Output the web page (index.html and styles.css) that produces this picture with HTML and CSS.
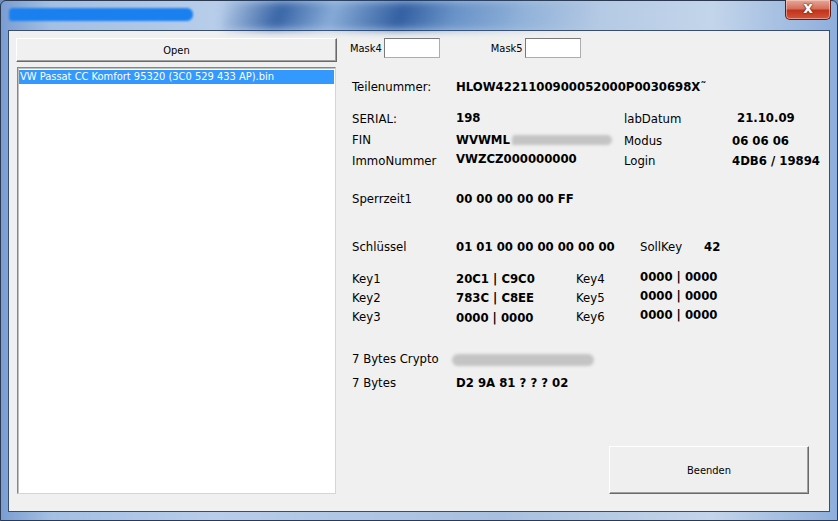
FILE: index.html
```html
<!DOCTYPE html>
<html>
<head>
<meta charset="utf-8">
<link rel="stylesheet" href="styles.css">
</head>
<body>
<div class="window">
  <div class="titlebar">
    <div class="title-blur"></div>
    <div class="streaks"></div>
    <div class="close-btn"><span>x</span></div>
  </div>
  <div class="client">
    <div class="left">
      <button class="btn open-btn">Open</button>
      <div class="listbox">
        <div class="list-item selected">VW Passat CC Komfort 95320 (3C0 529 433 AP).bin</div>
      </div>
    </div>
    <div class="right">
      <div class="mask-row">
        <span class="small-label">Mask4</span><span class="textbox"></span>
        <span class="small-label mask5">Mask5</span><span class="textbox"></span>
      </div>
      <div class="row teil">
        <span class="lbl">Teilenummer:</span><span class="val">HLOW4221100900052000P0030698X˜</span>
      </div>
      <div class="grid info">
        <span class="lbl">SERIAL:</span><span class="val">198</span><span class="lbl">labDatum</span><span class="val shift">21.10.09</span>
        <span class="lbl">FIN</span><span class="val fin">WVWML<span class="smudge fin-smudge"></span></span><span class="lbl mod">Modus</span><span class="val mod">06 06 06</span>
        <span class="lbl">ImmoNummer</span><span class="val up">VWZCZ000000000</span><span class="lbl">Login</span><span class="val">4DB6 / 19894</span>
      </div>
      <div class="row sperr">
        <span class="lbl">Sperrzeit1</span><span class="val">00 00 00 00 00 FF</span>
      </div>
      <div class="grid schl">
        <span class="lbl">Schlüssel</span><span class="val">01 01 00 00 00 00 00 00</span><span class="lbl">SollKey</span><span class="val">42</span>
      </div>
      <div class="grid keys">
        <span class="lbl">Key1</span><span class="val">20C1 | C9C0</span><span class="lbl">Key4</span><span class="val up">0000 | 0000</span>
        <span class="lbl">Key2</span><span class="val">783C | C8EE</span><span class="lbl">Key5</span><span class="val up">0000 | 0000</span>
        <span class="lbl">Key3</span><span class="val down">0000 | 0000</span><span class="lbl">Key6</span><span class="val up">0000 | 0000</span>
      </div>
      <div class="grid bytes">
        <span class="lbl">7 Bytes Crypto</span><span class="val"><span class="smudge crypto-smudge"></span></span>
        <span class="lbl">7 Bytes</span><span class="val">D2 9A 81 ? ? ? 02</span>
      </div>
      <div class="bottom">
        <button class="btn end-btn">Beenden</button>
      </div>
    </div>
  </div>
  <div class="bottom-frame"></div>
</div>
</body>
</html>
```
FILE: styles.css
```css
* { box-sizing: border-box; }
html, body { margin: 0; padding: 0; }
body {
  width: 838px; height: 521px; overflow: hidden;
  background: #6f8fbf;
  font-family: "DejaVu Sans Condensed", "DejaVu Sans", sans-serif;
}
.window {
  width: 838px; height: 521px;
  display: flex; flex-direction: column;
  background: linear-gradient(90deg, #7a9dd2 0%, #a3bfe3 6%, #b7cdea 25%, #a8c0df 60%, #c3d5ea 85%, #8eaedc 100%);
  border: 1px solid #2b3a52;
  border-radius: 6px 6px 0 0;
  padding: 0 7px 0 7px;
}
.titlebar {
  height: 29px; flex: none;
  position: relative;
}
.streaks {
  position: absolute; left: 215px; top: 0; width: 370px; height: 29px;
  background: linear-gradient(110deg, rgba(40,90,160,0) 0%, rgba(25,75,150,0.8) 16%, rgba(60,120,190,0.35) 30%, rgba(20,70,145,0.8) 48%, rgba(40,100,175,0.5) 62%, rgba(70,130,195,0.25) 80%, rgba(60,120,190,0) 100%);
  filter: blur(4px);
}
.title-blur {
  position: absolute; left: 1px; top: 7px; width: 184px; height: 13px;
  background: #1b80ef;
  border-radius: 4px 6px 6px 3px;
  filter: blur(0.8px);
  z-index: 1;
}
.close-btn {
  position: absolute; right: -1px; top: -1px; width: 46px; height: 20px;
  background: linear-gradient(180deg, #e7a89a 0%, #d5705c 45%, #c2331c 55%, #d2553c 100%);
  border: 1px solid #5a1f1a;
  border-top: none;
  border-radius: 0 0 5px 5px;
  box-shadow: inset 0 0 0 1px rgba(255,220,210,0.5);
  display: flex; align-items: center; justify-content: center;
  z-index: 2;
}
.close-btn span {
  color: #fff; font: bold 15px/1 "DejaVu Sans", sans-serif;
  text-shadow: 0 0 2px #5a1010, 0 0 1px #5a1010;
  margin-top: -3px;
}
.client {
  flex: 1;
  background: #f0f0f0;
  border: 1px solid #3a4e6c;
  display: flex;
  padding: 7px 20px 17px 7px;
}
.bottom-frame { height: 8px; flex: none; }
.left {
  width: 321px; flex: none;
  display: flex; flex-direction: column;
}
.btn {
  font: 11px "DejaVu Sans Condensed", "DejaVu Sans", sans-serif;
  color: #000;
  padding: 0;
}
.open-btn { height: 24px; width: 321px; background: #f0f0f0; border: 1px solid #fff; border-right-color: #696969; border-bottom-color: #696969; box-shadow: inset -1px -1px 0 #a0a0a0; }
.listbox {
  margin: 5px 1px 0 1px;
  flex: 1;
  background: #fff;
  border: 1px solid #d5d5d5;
  border-top-color: #828790; border-left-color: #828790;
  box-shadow: inset 1px 1px 0 #c0c0c0;
  padding: 2px 1px;
}
.list-item {
  font: 11px/14px "DejaVu Sans Condensed", "DejaVu Sans", sans-serif;
  padding-left: 1px;
  white-space: nowrap;
}
.selected { background: #3399ff; color: #fff; }
.right {
  flex: 1;
  min-width: 0;
  margin-left: 13px;
  display: flex; flex-direction: column;
  font-size: 13px;
  color: #000;
}
.mask-row { display: flex; align-items: center; height: 20px; }
.small-label { font-size: 11px; margin-right: 2px; }
.mask5 { margin-left: 51px; }
.textbox {
  width: 56px; height: 20px; background: #fff;
  border: 1px solid #abadb3; border-top-color: #7a7a7a; border-left-color: #7a7a7a;
}
.lbl, .val { white-space: nowrap; }
.val { font-weight: bold; }
.row { display: flex; line-height: 20px; padding-left: 2px; }
.row .lbl { width: 104px; flex: none; }
.teil { margin-top: 19px; }
.grid { display: grid; padding-left: 2px; }
.info { grid-template-columns: 104px 168px 108px auto; line-height: 21px; margin-top: 11px; }
.shift { padding-left: 5px; }
.info .val:nth-child(2), .info .val:nth-child(4) { position: relative; top: -1px; }
.mod { position: relative; top: 1px; }
.up { position: relative; top: -2px; }
.down { position: relative; top: 1px; }
.fin { display: flex; align-items: center; position: relative; }
.smudge {
  display: inline-block; background: #c4c4c4; border-radius: 8px;
  filter: blur(1.5px);
}
.fin-smudge { width: 100px; height: 10px; margin-left: 2px; margin-top: 1px; border-radius: 6px 8px 8px 2px; }
.sperr { margin-top: 18px; }
.schl { grid-template-columns: 104px 184px 64px auto; line-height: 20px; margin-top: 28px; }
.keys { grid-template-columns: 104px 120px 64px auto; line-height: 19px; margin-top: 12px; }
.bytes { grid-template-columns: 104px auto; line-height: 24px; margin-top: 21px; }
.crypto-smudge { width: 142px; height: 12px; vertical-align: middle; margin-left: -4px; }
.bottom { margin-top: auto; display: flex; justify-content: flex-end; }
.end-btn { width: 200px; height: 48px; background: #efefef; border: 1px solid #fff; border-right-color: #696969; border-bottom-color: #696969; box-shadow: inset -1px -1px 0 #a0a0a0; }
```
